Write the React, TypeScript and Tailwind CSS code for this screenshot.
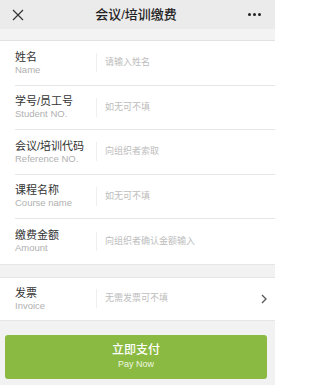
const fields = [
  { zh: "姓名", en: "Name", ph: "请输入姓名" },
  { zh: "学号/员工号", en: "Student NO.", ph: "如无可不填" },
  { zh: "会议/培训代码", en: "Reference NO.", ph: "向组织者索取" },
  { zh: "课程名称", en: "Course name", ph: "如无可不填" },
  { zh: "缴费金额", en: "Amount", ph: "向组织者确认金额输入" },
];

const font = { fontFamily: '"Liberation Sans", "Noto Sans CJK SC", sans-serif' };

function Row({ zh, en, ph, last, chevron }: { zh: string; en: string; ph: string; last?: boolean; chevron?: boolean }) {
  return (
    <div
      className={`flex items-center ml-[15px] pr-[6px] ${chevron ? "h-[42px]" : "h-[44.6px]"} ${
        last ? "" : "border-b border-[#e6e6e6]"
      }`}
    >
      <div className="w-[81px] flex flex-col leading-none">
        <span className="text-[11px] text-[#333]">{zh}</span>
        <span className="text-[9.5px] text-[#b0b0b0] mt-[2px]">{en}</span>
      </div>
      <div className="w-px h-[19px] bg-[#efefef]" />
      <span className="ml-[8px] flex-1 text-[9px] text-[#bdbdbd]">{ph}</span>
      {chevron && (
        <svg width="8" height="10" viewBox="0 0 8 10" className="mr-[1px]">
          <path d="M2 1 L6 5 L2 9" fill="none" stroke="#555" strokeWidth="1.3" />
        </svg>
      )}
    </div>
  );
}

export default function App() {
  return (
    <div className="w-[275px] h-[385px] bg-[#f2f2f2] overflow-hidden" style={font}>
      <div className="h-[29px] bg-[#ebebeb] flex items-center justify-between px-[12px]">
        <svg width="12" height="12" viewBox="0 0 12 12">
          <path d="M1 1 L11 11 M11 1 L1 11" stroke="#333" strokeWidth="1.2" />
        </svg>
        <span className="text-[13px] text-[#222] font-medium">会议/培训缴费</span>
        <div className="flex gap-[2px] mr-[2px]">
          <span className="w-[3px] h-[3px] rounded-full bg-[#222]" />
          <span className="w-[3px] h-[3px] rounded-full bg-[#222]" />
          <span className="w-[3px] h-[3px] rounded-full bg-[#222]" />
        </div>
      </div>
      <div className="h-[11px] bg-[#f3f3f3] border-b border-[#e2e2e2] box-content" />
      <div className="bg-white border-b border-[#e6e6e6]">
        {fields.map((f, i) => (
          <Row key={f.zh} {...f} last={i === fields.length - 1} />
        ))}
      </div>
      <div className="h-[12px]" />
      <div className="bg-white border-y border-[#e6e6e6]">
        <Row zh="发票" en="Invoice" ph="无需发票可不填" last chevron />
      </div>
      <div className="px-[5px] pr-[8px] mt-[14px]">
        <button className="w-full h-[44px] rounded-[3px] bg-[#8aba41] flex flex-col items-center justify-center text-white leading-none">
          <span className="text-[12px] font-medium">立即支付</span>
          <span className="text-[9px] mt-[4px] text-[#eef6e2]">Pay Now</span>
        </button>
      </div>
    </div>
  );
}
